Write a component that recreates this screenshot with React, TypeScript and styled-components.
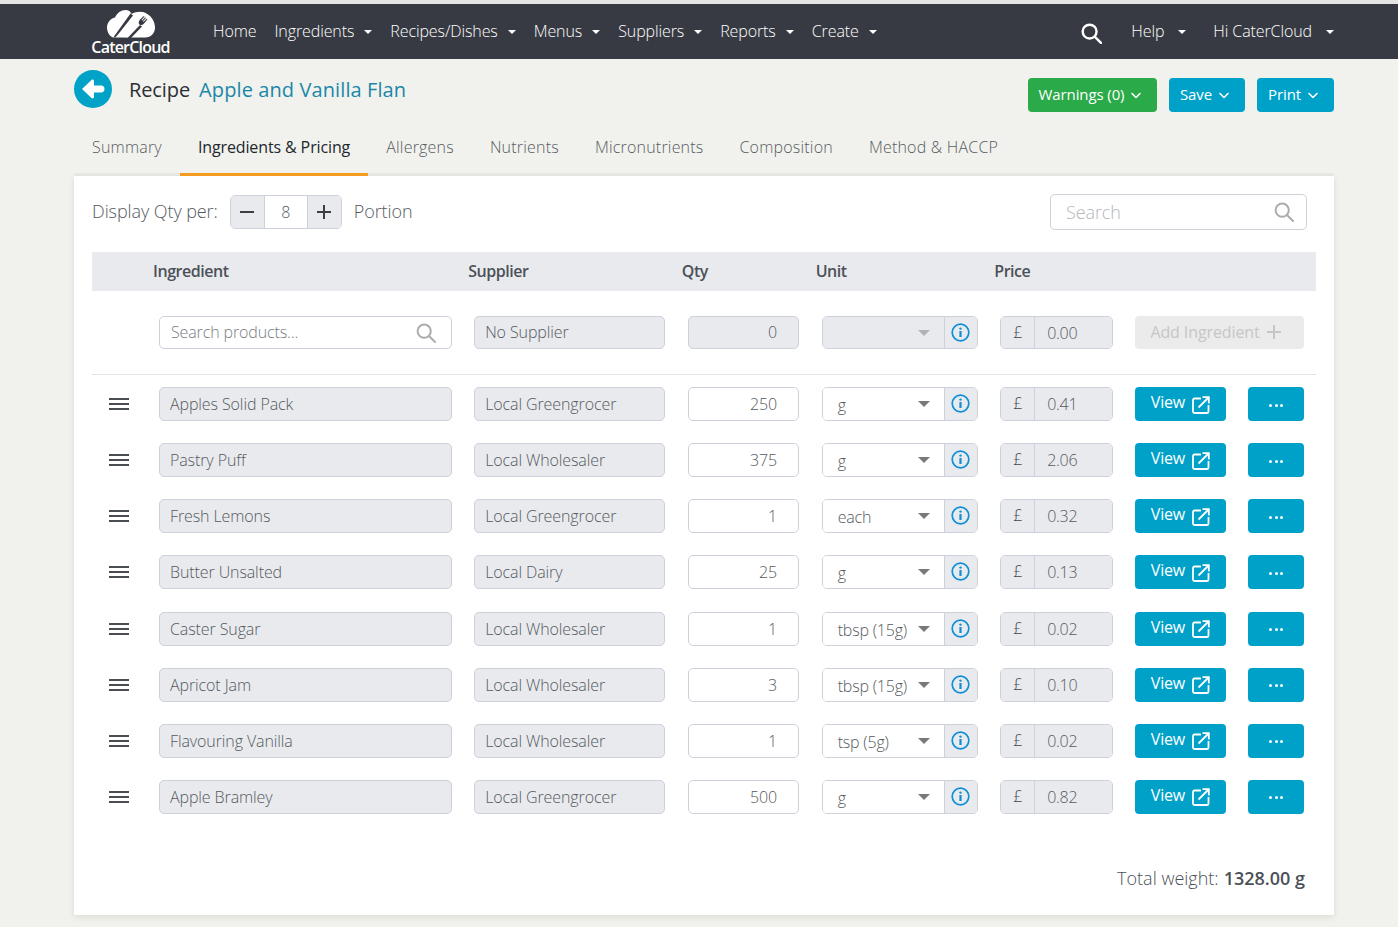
import React from "react";
import styled, { createGlobalStyle } from "styled-components";

const Global = createGlobalStyle`
  html, body { margin: 0; padding: 0; background: #f1f2ed; }
  body { font-family: "Open Sans", "Liberation Sans", sans-serif; color: #555a60; }
  * { box-sizing: border-box; }
`;

const Page = styled.div`
  width: 1398px;
  height: 927px;
  overflow: hidden;
  background: #f1f2ed;
  border-top: 4px solid #e4e4e4;
`;

const Nav = styled.header`
  height: 55px;
  background: #373a42;
  display: flex;
  align-items: center;
  padding-left: 91px;
  padding-right: 55px;
  color: #fff;
`;

const Logo = styled.div`
  width: 79px;
  height: 55px;
  margin-right: 34px;
  display: flex;
  flex-direction: column;
  align-items: center;
  padding-top: 6px;
  flex: none;
`;

const LogoText = styled.span`
  font-size: 16px;
  font-weight: 600;
  line-height: 17px;
  letter-spacing: -0.8px;
  color: #fff;
  margin-top: 1px;
`;

const NavLinks = styled.nav`
  display: flex;
  align-items: center;
`;

const NavSpacer = styled.div`
  flex: 1;
`;

const NavLink = styled.span<{ $end?: boolean }>`
  font-size: 16px;
  font-weight: 300;
  letter-spacing: -0.1px;
  padding: 0 9px 2px;
  margin-left: ${(p) => (p.$end ? "9px" : "0")};
  display: inline-flex;
  align-items: center;
  white-space: nowrap;
  color: #fff;
`;

const Caret = styled.i<{ $wide?: boolean }>`
  display: inline-block;
  margin-left: ${(p) => (p.$wide ? "14px" : "10px")};
  margin-top: 2px;
  width: 0;
  height: 0;
  border-left: 4px solid transparent;
  border-right: 4px solid transparent;
  border-top: 4px solid #fff;
`;

const NavSearch = styled.span`
  display: inline-flex;
  margin-right: 20px;
  margin-top: 4px;
`;

const TitleBar = styled.div`
  margin: 0 64px 0 74px;
  height: 82px;
  padding-top: 11px;
  display: flex;
  align-items: flex-start;
`;

const BackButton = styled.div`
  width: 38px;
  height: 38px;
  border-radius: 50%;
  background: #00a2c7;
  display: flex;
  align-items: center;
  justify-content: center;
  flex: none;
  margin-right: 17px;
`;

const TitleText = styled.div`
  font-size: 20px;
  line-height: 40px;
  color: #2b2f36;
  font-weight: 400;
  letter-spacing: -0.1px;
  white-space: nowrap;
`;

const TitleName = styled.span`
  color: #1b87a8;
  margin-left: 9px;
  letter-spacing: 0.1px;
`;

const TitleActions = styled.div`
  margin-left: auto;
  margin-top: 8px;
  display: flex;
  gap: 12px;
`;

const ActionButton = styled.div<{ $green?: boolean; $w: number }>`
  height: 34px;
  width: ${(p) => p.$w}px;
  border-radius: 4px;
  background: ${(p) => (p.$green ? "#2aaa48" : "#00a1c9")};
  color: #fff;
  font-size: 15px;
  font-weight: 400;
  letter-spacing: -0.1px;
  padding: 0 5px 3px 0;
  display: flex;
  align-items: center;
  justify-content: center;
  gap: 7px;
`;

const ChevronWrap = styled.span`
  display: inline-flex;
  margin-top: 3px;
`;

const Tabs = styled.div`
  margin: 0 64px 0 74px;
  height: 35px;
  display: flex;
  border-bottom: 3px solid #e9e9e7;
`;

const Tab = styled.div<{ $active?: boolean }>`
  height: 35px;
  padding: 0 18px;
  font-size: 16px;
  line-height: 12px;
  font-weight: ${(p) => (p.$active ? 400 : 300)};
  letter-spacing: ${(p) => (p.$active ? "-0.12px" : "0.2px")};
  color: ${(p) => (p.$active ? "#23272e" : "#585c63")};
  border-bottom: 3px solid ${(p) => (p.$active ? "#f39c1f" : "transparent")};
  white-space: nowrap;
`;

const Panel = styled.main`
  margin: 0 64px 0 74px;
  height: 739px;
  background: #fff;
  padding: 18px 18px 0;
  box-shadow: 0 2px 6px rgba(120, 120, 100, 0.18);
`;

const DisplayRow = styled.div`
  height: 36px;
  display: flex;
  align-items: center;
  padding-right: 9px;
`;

const DisplayLabel = styled.span`
  font-size: 18px;
  font-weight: 300;
  letter-spacing: -0.08px;
  color: #555a60;
  padding-bottom: 3px;
`;

const Stepper = styled.div`
  display: flex;
  height: 34px;
  width: 112px;
  margin: 0 12px;
  border: 1px solid #ced1da;
  border-radius: 5px;
  overflow: hidden;
`;

const StepButton = styled.div`
  width: 33px;
  flex: none;
  background: #e9eaee;
  display: flex;
  align-items: center;
  justify-content: center;
`;

const StepValue = styled.div`
  flex: 1;
  border-left: 1px solid #ced1da;
  border-right: 1px solid #ced1da;
  display: flex;
  align-items: center;
  justify-content: center;
  font-size: 16px;
  font-weight: 300;
  color: #555a60;
`;

const SearchBox = styled.div<{ $w?: number; $h: number; $size: number; $pad: number }>`
  ${(p) => (p.$w ? `width: ${p.$w}px; margin-left: auto;` : "")}
  height: ${(p) => p.$h}px;
  border: 1px solid #ced1da;
  border-radius: 5px;
  background: #fff;
  display: flex;
  align-items: center;
  justify-content: space-between;
  padding: 0 ${(p) => p.$pad - 3}px 0 ${(p) => p.$pad}px;
  font-size: ${(p) => p.$size}px;
  font-weight: 300;
  color: #8d9097;
`;

const SearchPlaceholder = styled.span<{ $light?: boolean; $lift?: boolean }>`
  color: ${(p) => (p.$light ? "#b4b6bb" : "#777b82")};
  letter-spacing: -0.12px;
  padding-bottom: ${(p) => (p.$lift ? "2px" : "0")};
`;

const EntryIcon = styled.span`
  display: inline-flex;
  margin-right: 7px;
`;

const columns = "44.4px 292.6px 191px 111.3px 156px 112.3px 90.5px 55.7px";

const TableHead = styled.div`
  margin-top: 22px;
  height: 39px;
  background: #e9eaee;
  display: grid;
  grid-template-columns: ${columns};
  column-gap: 22.6px;
  align-items: center;
  padding-right: 12px;
`;

const HeadCell = styled.div`
  margin-left: -6px;
  padding-bottom: 1px;
  font-size: 16px;
  font-weight: 600;
  letter-spacing: -0.45px;
  color: #4c5158;
`;

const Row = styled.div`
  display: grid;
  grid-template-columns: ${columns};
  column-gap: 22.6px;
  align-items: center;
  padding-right: 12px;
  height: 34px;
  margin-bottom: 22.14px;
`;

const EntryRow = styled(Row)`
  margin-top: 25px;
  height: 33px;
  margin-bottom: 25px;
`;

const Divider = styled.hr`
  margin: 0 0 12px;
  border: 0;
  border-top: 1px solid #e2e3e7;
`;

const Drag = styled.div`
  display: flex;
  justify-content: flex-end;
  padding-right: 7.4px;
`;

const Field = styled.div<{ $right?: boolean; $white?: boolean; $lift?: boolean }>`
  height: 100%;
  min-height: 33px;
  border: 1px solid #ced1da;
  border-radius: 5px;
  background: ${(p) => (p.$white ? "#fff" : "#e9eaee")};
  display: flex;
  align-items: center;
  justify-content: ${(p) => (p.$right ? "flex-end" : "flex-start")};
  padding: ${(p) => (p.$right ? "0 21px" : "0 0 0 10px")};
  padding-bottom: ${(p) => (p.$lift ? "2px" : "0")};
  font-size: 16px;
  font-weight: 300;
  letter-spacing: -0.1px;
  color: #555a60;
  white-space: nowrap;
  overflow: hidden;
`;

const Group = styled.div`
  height: 100%;
  min-height: 33px;
  display: flex;
  border: 1px solid #ced1da;
  border-radius: 5px;
  overflow: hidden;
`;

const UnitSelect = styled.div<{ $disabled?: boolean }>`
  flex: 1;
  background: ${(p) => (p.$disabled ? "#e9eaee" : "#fff")};
  display: flex;
  align-items: center;
  justify-content: space-between;
  padding: 2px 14px 0 15px;
  font-size: 16px;
  font-weight: 300;
  letter-spacing: -0.2px;
  color: #555a60;
  white-space: nowrap;
`;

const SelectArrow = styled.i<{ $disabled?: boolean }>`
  flex: none;
  margin-top: -2px;
  width: 0;
  height: 0;
  border-left: 6px solid transparent;
  border-right: 6px solid transparent;
  border-top: 6px solid ${(p) => (p.$disabled ? "#b2b2b5" : "#77797d")};
`;

const InfoAddon = styled.div`
  width: 33px;
  flex: none;
  background: #e9eaee;
  border-left: 1px solid #ced1da;
  display: flex;
  align-items: center;
  justify-content: center;
  padding-bottom: 1px;
`;

const Pound = styled.div`
  width: 34px;
  flex: none;
  background: #e9eaee;
  border-right: 1px solid #ced1da;
  display: flex;
  align-items: center;
  justify-content: center;
  font-size: 16px;
  font-weight: 300;
  color: #43464c;
  padding-bottom: 2px;
`;

const PriceValue = styled.div`
  flex: 1;
  background: #e9eaee;
  display: flex;
  align-items: center;
  padding-left: 12px;
  font-size: 16px;
  font-weight: 300;
  letter-spacing: -0.3px;
  color: #555a60;
`;

const AddButton = styled.div`
  grid-column: span 2;
  height: 33px;
  border-radius: 4px;
  background: #ebebeb;
  color: #c6c6c6;
  font-size: 16px;
  font-weight: 400;
  letter-spacing: -0.1px;
  display: flex;
  align-items: center;
  justify-content: center;
  gap: 7px;
  padding: 0 8px 2px 0;
`;

const ViewButton = styled.div`
  height: 34px;
  border-radius: 4px;
  background: #00a1c9;
  color: #fff;
  font-size: 16px;
  font-weight: 400;
  letter-spacing: -0.2px;
  display: flex;
  align-items: center;
  justify-content: center;
  gap: 7px;
  padding-bottom: 4px;
`;

const ExternalWrap = styled.span`
  display: inline-flex;
  margin-top: 5px;
`;

const MoreButton = styled(ViewButton)`
  padding: 2px 0 0;
  gap: 2.5px;
`;

const Dot = styled.i`
  width: 3px;
  height: 3px;
  background: #fff;
  border-radius: 50%;
`;

const Total = styled.div`
  margin-top: 52px;
  padding-right: 11px;
  text-align: right;
  font-size: 18px;
  font-weight: 300;
  letter-spacing: 0;
  color: #4c5158;
`;

const TotalValue = styled.b`
  font-weight: 600;
  margin-left: 5px;
`;

const SearchIcon = ({ size, color, sw }: { size: number; color: string; sw: number }) => (
  <svg width={size} height={size} viewBox="0 0 20 20" fill="none" stroke={color} strokeWidth={sw} strokeLinecap="round">
    <circle cx="8.2" cy="8.2" r="6.6" />
    <path d="M13 13l6 6" />
  </svg>
);

const Chevron = () => (
  <ChevronWrap>
    <svg width="10" height="7" viewBox="0 0 10 7" fill="none" stroke="#fff" strokeWidth="1.6" strokeLinecap="round" strokeLinejoin="round">
      <path d="M1 1.5l4 4 4-4" />
    </svg>
  </ChevronWrap>
);

const InfoIcon = () => (
  <svg width="19" height="19" viewBox="0 0 19 19">
    <circle cx="9.5" cy="9.5" r="8.3" fill="none" stroke="#0e8fd6" strokeWidth="1.7" />
    <circle cx="9.5" cy="5.6" r="1.2" fill="#0e8fd6" />
    <rect x="8.4" y="8" width="2.2" height="6" fill="#0e8fd6" />
  </svg>
);

const Hamburger = () => (
  <svg width="20" height="12" viewBox="0 0 20 12" fill="#4a4d52">
    <rect y="0" width="20" height="2" />
    <rect y="5" width="20" height="2" />
    <rect y="10" width="20" height="2" />
  </svg>
);

const ExternalIcon = () => (
  <ExternalWrap>
    <svg width="18" height="18" viewBox="0 0 18 18" fill="none" stroke="#fff" strokeWidth="1.8">
      <path d="M9 2.5H2.5A1.5 1.5 0 0 0 1 4v11.5A1.5 1.5 0 0 0 2.5 17H15a1.5 1.5 0 0 0 1.5-1.5V9" />
      <path d="M6.5 11.5L16 2M10.500 1.200h6.300v6.300" />
    </svg>
  </ExternalWrap>
);

const LogoMark = () => (
  <svg width="48" height="28" viewBox="0 0 48 28">
    <path
      fill="#fff"
      d="M7 27.500C3 27 0 22.500 0 17.500 0 12.500 3.500 8.500 8 7.500 10 3 14 0 18.500 0 21.500 0 23.500 1.500 24.500 4 27 2.500 30 1.800 33 1.800c8 0 14.500 7 15 15 .3 6-4 10.700-9.500 10.700H29l-3 0-3 .3-7-.3H7z"
    />
    <path fill="#373a42" d="M23.500 3.500L26 5.500 11 24.500 8 27.800 6.800 26.800z" />
    <path fill="#373a42" d="M33 15l2 1.600-11 11.400h-3.500z" />
    <path fill="#373a42" d="M33 9.500l3.800-3.500 .7 .6-3 3.300 .6 .6 3.200-3.200 .7 .6-3.100 3.300 .6 .6 3.300-3 .6 .7-3.400 4c-1.500 1.600-3.500 2-4.600 1-1.200-1.100-.8-3 .6-5z" />
  </svg>
);

const BackArrow = () => (
  <svg width="24" height="20" viewBox="0 0 24 20" fill="#fff">
    <path d="M1 10l9.500-9c1-.9 2.500-.2 2.500 1v4.500h7c2.200 0 3.500 1.500 3.500 3.500s-1.300 3.500-3.500 3.500h-7V18c0 1.200-1.500 1.900-2.500 1L1 10z" />
  </svg>
);

const rows = [
  ["Apples Solid Pack", "Local Greengrocer", "250", "g", "0.41"],
  ["Pastry Puff", "Local Wholesaler", "375", "g", "2.06"],
  ["Fresh Lemons", "Local Greengrocer", "1", "each", "0.32"],
  ["Butter Unsalted", "Local Dairy", "25", "g", "0.13"],
  ["Caster Sugar", "Local Wholesaler", "1", "tbsp (15g)", "0.02"],
  ["Apricot Jam", "Local Wholesaler", "3", "tbsp (15g)", "0.10"],
  ["Flavouring Vanilla", "Local Wholesaler", "1", "tsp (5g)", "0.02"],
  ["Apple Bramley", "Local Greengrocer", "500", "g", "0.82"],
];

const navItems: [string, boolean][] = [
  ["Home", false],
  ["Ingredients", true],
  ["Recipes/Dishes", true],
  ["Menus", true],
  ["Suppliers", true],
  ["Reports", true],
  ["Create", true],
];

const tabs = ["Summary", "Ingredients & Pricing", "Allergens", "Nutrients", "Micronutrients", "Composition", "Method & HACCP"];

export default function App() {
  return (
    <Page>
      <Global />
      <Nav>
        <Logo>
          <LogoMark />
          <LogoText>CaterCloud</LogoText>
        </Logo>
        <NavLinks>
          {navItems.map(([label, caret]) => (
            <NavLink key={label}>
              {label}
              {caret && <Caret />}
            </NavLink>
          ))}
        </NavLinks>
        <NavSpacer />
        <NavSearch>
          <SearchIcon size={21} color="#fff" sw={2.3} />
        </NavSearch>
        <NavLink>
          Help
          <Caret $wide />
        </NavLink>
        <NavLink $end>
          Hi CaterCloud
          <Caret $wide />
        </NavLink>
      </Nav>

      <TitleBar>
        <BackButton>
          <BackArrow />
        </BackButton>
        <TitleText>
          Recipe
          <TitleName>Apple and Vanilla Flan</TitleName>
        </TitleText>
        <TitleActions>
          <ActionButton $green $w={129}>
            Warnings (0) <Chevron />
          </ActionButton>
          <ActionButton $w={76}>
            Save <Chevron />
          </ActionButton>
          <ActionButton $w={77}>
            Print <Chevron />
          </ActionButton>
        </TitleActions>
      </TitleBar>

      <Tabs>
        {tabs.map((t) => (
          <Tab key={t} $active={t === "Ingredients & Pricing"}>
            {t}
          </Tab>
        ))}
      </Tabs>

      <Panel>
        <DisplayRow>
          <DisplayLabel>Display Qty per:</DisplayLabel>
          <Stepper>
            <StepButton>
              <svg width="14" height="14" viewBox="0 0 14 14" stroke="#3c3f44" strokeWidth="2">
                <path d="M0 7h14" />
              </svg>
            </StepButton>
            <StepValue>8</StepValue>
            <StepButton>
              <svg width="14" height="14" viewBox="0 0 14 14" stroke="#3c3f44" strokeWidth="2">
                <path d="M0 7h14M7 0v14" />
              </svg>
            </StepButton>
          </Stepper>
          <DisplayLabel>Portion</DisplayLabel>
          <SearchBox $w={257} $h={36} $size={18} $pad={15}>
            <SearchPlaceholder $light>Search</SearchPlaceholder>
            <SearchIcon size={20} color="#acacac" sw={2} />
          </SearchBox>
        </DisplayRow>

        <TableHead>
          <span />
          <HeadCell>Ingredient</HeadCell>
          <HeadCell>Supplier</HeadCell>
          <HeadCell>Qty</HeadCell>
          <HeadCell>Unit</HeadCell>
          <HeadCell>Price</HeadCell>
        </TableHead>

        <EntryRow>
          <span />
          <SearchBox $h={33} $size={16} $pad={11}>
            <SearchPlaceholder $lift>Search products...</SearchPlaceholder>
            <EntryIcon>
              <SearchIcon size={20} color="#acacac" sw={2} />
            </EntryIcon>
          </SearchBox>
          <Field $lift>No Supplier</Field>
          <Field $right $lift>
            0
          </Field>
          <Group>
            <UnitSelect $disabled>
              <span />
              <SelectArrow $disabled />
            </UnitSelect>
            <InfoAddon>
              <InfoIcon />
            </InfoAddon>
          </Group>
          <Group>
            <Pound>£</Pound>
            <PriceValue>0.00</PriceValue>
          </Group>
          <AddButton>
            Add Ingredient
            <svg width="14" height="14" viewBox="0 0 14 14" stroke="#c6c6c6" strokeWidth="2">
              <path d="M0 7h14M7 0v14" />
            </svg>
          </AddButton>
        </EntryRow>

        <Divider />

        {rows.map(([name, supplier, qty, unit, price]) => (
          <Row key={name}>
            <Drag>
              <Hamburger />
            </Drag>
            <Field>{name}</Field>
            <Field>{supplier}</Field>
            <Field $right $white>
              {qty}
            </Field>
            <Group>
              <UnitSelect>
                <span>{unit}</span>
                <SelectArrow />
              </UnitSelect>
              <InfoAddon>
                <InfoIcon />
              </InfoAddon>
            </Group>
            <Group>
              <Pound>£</Pound>
              <PriceValue>{price}</PriceValue>
            </Group>
            <ViewButton>
              View <ExternalIcon />
            </ViewButton>
            <MoreButton>
              <Dot />
              <Dot />
              <Dot />
            </MoreButton>
          </Row>
        ))}

        <Total>
          Total weight:<TotalValue>1328.00 g</TotalValue>
        </Total>
      </Panel>
    </Page>
  );
}
